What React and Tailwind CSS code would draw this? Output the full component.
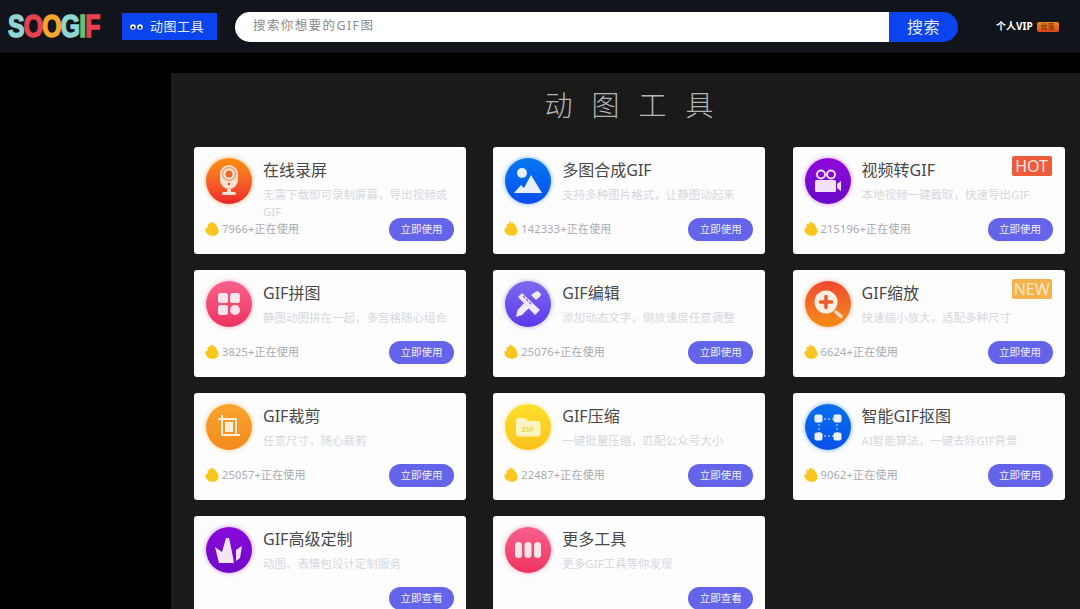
import React from "react";

const Thumb = () => (
  <svg width="14" height="15" viewBox="0 0 14 15" className="shrink-0 -translate-y-px -translate-x-px scale-110">
    <path
      d="M1 8.500C1 7 2.200 6.400 3 7V4.200C3 3 4.600 2.900 4.900 4L5.200 2.400C5.500 1.100 7.200 1.200 7.300 2.500C7.800 1.600 9.300 2 9.200 3.200C10 3 10.600 3.600 10.500 4.500C11.600 5.600 13 7.500 13 9.500C13 12.500 10.800 14.200 7.500 14.200C3.500 14.200 1 11.500 1 8.500Z"
      fill="#fbc61d"
    />
  </svg>
);

const icons = {
  record: (
    <svg width="30" height="34" viewBox="0 0 30 34">
      <rect x="6" y="1" width="18" height="24" rx="9" fill="#fbe3d2" />
      <circle cx="15" cy="10" r="6.500" fill="none" stroke="#f3a27f" strokeWidth="1.500" />
      <circle cx="15" cy="10" r="3.500" fill="#ee6a2c" />
      <circle cx="15" cy="20" r="1.200" fill="#e8403a" />
      <rect x="13" y="25" width="4" height="3" fill="#fbe3d2" />
      <rect x="8" y="28" width="14" height="3" rx="1.500" fill="#fbe3d2" />
    </svg>
  ),
  image: (
    <svg width="30" height="30" viewBox="0 0 30 30">
      <circle cx="9" cy="7" r="5" fill="#e8effd" />
      <path d="M1 27L8 19L11 22L18 9L29 27Z" fill="#e8effd" />
    </svg>
  ),
  video: (
    <svg width="28" height="24" viewBox="0 0 28 24">
      <circle cx="7" cy="5.500" r="4" fill="none" stroke="#f0e0f8" strokeWidth="2" />
      <circle cx="17" cy="5.500" r="4" fill="none" stroke="#f0e0f8" strokeWidth="2" />
      <rect x="1" y="11" width="21" height="12" rx="1.500" fill="#f0e0f8" />
      <path d="M23 15L27 12V22L23 19Z" fill="#f0e0f8" />
    </svg>
  ),
  grid: (
    <svg width="22" height="22" viewBox="0 0 22 22" fill="#fbe4ea">
      <rect x="0" y="0" width="10" height="10" rx="2.500" />
      <rect x="12" y="0" width="10" height="10" rx="2.500" />
      <rect x="0" y="12" width="10" height="10" rx="2.500" />
      <circle cx="17" cy="17" r="5" />
    </svg>
  ),
  edit: (
    <svg width="28" height="28" viewBox="0 0 28 28" fill="#efeafd">
      <path d="M4 7L8 3L26 20L21 25Z" />
      <path d="M17 5L22 1.500C23 1 24 1 25 2L26.500 3.500C27 4.500 27 5.500 26 6.500L22 10Z" />
      <path d="M14 9L19 14L8 25L2 27L3.500 20Z" />
      <path d="M9 6L11 8M12 9L14 11M15 12L17 14" stroke="#7a5df0" strokeWidth="1.200" />
    </svg>
  ),
  zoom: (
    <svg width="30" height="30" viewBox="0 0 30 30">
      <circle cx="13" cy="13" r="11.500" fill="#fdeee4" />
      <path d="M13 7.500V18.500M7.500 13H18.500" stroke="#ec5a25" strokeWidth="3.500" strokeLinecap="round" />
      <path d="M23 23L28 27.500" stroke="#fbd9b8" strokeWidth="3.500" strokeLinecap="round" />
    </svg>
  ),
  crop: (
    <svg width="24" height="26" viewBox="0 0 24 26" fill="none" stroke="#fdeedb" strokeWidth="2">
      <path d="M1 5H19V22" />
      <path d="M5 1V21H23" />
      <rect x="8" y="8" width="8" height="10" fill="#fdeedb" stroke="none" />
    </svg>
  ),
  zip: (
    <svg width="26" height="20" viewBox="0 0 26 20">
      <path d="M1 3C1 2 2 1 3 1H10L13 4H24C25 4 25.500 5 25.500 6V17C25.500 18.500 24.500 19.500 23 19.500H3C2 19.500 1 18.500 1 17Z" fill="#fdf3bf" />
      <text x="13" y="15" textAnchor="middle" fontSize="8" fontWeight="700" fill="#f6d53a" fontFamily="Liberation Sans, sans-serif">ZIP</text>
    </svg>
  ),
  matte: (
    <svg width="28" height="27" viewBox="0 0 28 27">
      <path d="M6 5H22M6 22H22M5 6V21M23 6V21" stroke="#d6e4fd" strokeWidth="1" strokeDasharray="2 2" fill="none" />
      <rect x="0.500" y="0.500" width="8" height="8" rx="2" fill="#eaf1fe" />
      <rect x="19.500" y="0.500" width="8" height="8" rx="2" fill="#eaf1fe" />
      <rect x="0.500" y="18.500" width="8" height="8" rx="2" fill="#eaf1fe" />
      <rect x="19.500" y="18.500" width="8" height="8" rx="2" fill="#eaf1fe" />
    </svg>
  ),
  crown: (
    <svg width="28" height="28" viewBox="0 0 28 28" fill="#f6e6fb">
      <path d="M0 11L7 16L11 2L14 2L17 16L19 27H4Z" />
      <path d="M21 14L27 10L25 22L21 25Z" />
    </svg>
  ),
  more: (
    <svg width="26" height="16" viewBox="0 0 26 16" fill="#fbe4ea">
      <rect x="0" y="0" width="7" height="16" rx="3.500" />
      <rect x="9.500" y="0" width="7" height="16" rx="3.500" />
      <rect x="19" y="0" width="7" height="16" rx="3.500" />
    </svg>
  ),
};

const tools = [
  { title: "在线录屏", desc: "无需下载即可录制屏幕，导出视频或GIF", count: "7966", icon: "record", tone: "bg-gradient-to-b from-[#fb8f0c] to-[#ee1c2c] shadow-[0_0_5px_#fbb36a]" },
  { title: "多图合成GIF", desc: "支持多种图片格式，让静图动起来", count: "142333", icon: "image", tone: "bg-gradient-to-b from-[#0a78f0] to-[#0a4df0] shadow-[0_0_5px_#7db0fa]" },
  { title: "视频转GIF", desc: "本地视频一键截取，快速导出GIF", count: "215196", icon: "video", tone: "bg-gradient-to-b from-[#8f08dc] to-[#6a08c8] shadow-[0_0_5px_#cf8df0]", badge: "HOT" },
  { title: "GIF拼图", desc: "静图动图拼在一起，多宫格随心组合", count: "3825", icon: "grid", tone: "bg-gradient-to-b from-[#f8608c] to-[#ee3060] shadow-[0_0_5px_#fba3bb]" },
  { title: "GIF编辑", desc: "添加动态文字，倒放速度任意调整", count: "25076", icon: "edit", tone: "bg-gradient-to-b from-[#7f68ee] to-[#5b38ea] shadow-[0_0_5px_#b7a8f6]" },
  { title: "GIF缩放", desc: "快速缩小放大，适配多种尺寸", count: "6624", icon: "zoom", tone: "bg-gradient-to-b from-[#f0452f] to-[#f58c10] shadow-[0_0_5px_#f9b48a]", badge: "NEW" },
  { title: "GIF裁剪", desc: "任意尺寸，随心裁剪", count: "25057", icon: "crop", tone: "bg-gradient-to-b from-[#fba52c] to-[#f28a1c] shadow-[0_0_5px_#fbcb8a]" },
  { title: "GIF压缩", desc: "一键批量压缩，匹配公众号大小", count: "22487", icon: "zip", tone: "bg-gradient-to-b from-[#fde02a] to-[#fbc21c] shadow-[0_0_5px_#fde68a]" },
  { title: "智能GIF抠图", desc: "AI智能算法，一键去除GIF背景", count: "9062", icon: "matte", tone: "bg-gradient-to-b from-[#0a70ee] to-[#0a50ea] shadow-[0_0_5px_#7db0fa]" },
  { title: "GIF高级定制", desc: "动图、表情包设计定制服务", icon: "crown", tone: "bg-gradient-to-b from-[#8a08dc] to-[#7008c8] shadow-[0_0_5px_#cf8df0]", action: "立即查看" },
  { title: "更多工具", desc: "更多GIF工具等你发现", icon: "more", tone: "bg-gradient-to-b from-[#f8608c] to-[#ee3060] shadow-[0_0_5px_#fba3bb]", action: "立即查看" },
];

const ToolCard = ({ tool }) => (
  <div className="relative flex h-[107px] flex-col rounded-[3px] bg-[#fdfdfe] pb-[13px] pl-3 pr-3 pt-[11px]">
    {tool.badge === "HOT" && (
      <span className="absolute right-[13px] top-[9px] flex h-5 w-10 items-center justify-center rounded-[2px] bg-[#ee5a3c] text-[16px] leading-none text-[#fde8df]">HOT</span>
    )}
    {tool.badge === "NEW" && (
      <span className="absolute right-[13px] top-[9px] flex h-5 w-10 items-center justify-center rounded-[2px] bg-[#f6b24c] text-[16px] leading-none text-[#fdeacb]">NEW</span>
    )}
    <div className="flex gap-[11px]">
      <div className={`flex h-[46px] w-[46px] shrink-0 items-center justify-center rounded-full ${tool.tone}`}>
        {icons[tool.icon]}
      </div>
      <div className="min-w-0 pt-px">
        <h3 className="text-[16px] leading-[22px] text-[#484848]">{tool.title}</h3>
        <p className="mt-[5px] h-[31px] w-[190px] text-[11.500px] leading-[17px] text-[#d6d8dd]">{tool.desc}</p>
      </div>
    </div>
    <div className="mt-auto flex items-center justify-between">
      {tool.count ? (
        <div className="flex items-center gap-[2px] text-[11px] tracking-[0.2px] text-[#a9abb0]">
          <Thumb />
          <span>{tool.count}+正在使用</span>
        </div>
      ) : (
        <span />
      )}
      <button className="h-[23px] w-[65px] rounded-full bg-[#6464ea] text-[10.500px] text-[#f0f0fd]">
        {tool.action || "立即使用"}
      </button>
    </div>
  </div>
);

const App = () => {
  return (
    <div className="h-[609px] w-[1080px] overflow-hidden bg-black font-['Noto_Sans','Noto_Sans_CJK_SC',sans-serif]">
      {/* Header */}
      <header className="flex h-[53px] items-center bg-[#12141c] pl-2">
        <div className="w-[92px] overflow-visible">
          <div className="flex origin-left scale-x-[0.8] items-center font-['Liberation_Sans',sans-serif] text-[31px] font-bold leading-none tracking-[-1px] [-webkit-text-stroke:1.5px_currentColor]">
            <span className="text-[#8fd6d2]">S</span>
            <span className="text-[#e8424f]">O</span>
            <span className="text-[#f3a72e]">O</span>
            <span className="text-[#8fd6d2]">G</span>
            <span className="text-[#6fbf73]">I</span>
            <span className="text-[#e8424f]">F</span>
          </div>
        </div>
        <button className="ml-[22px] flex h-[27px] w-[95px] items-center gap-[7px] bg-[#0b44ee] pl-2 text-[13px] tracking-[0.5px] text-[#e6ecfd]">
          <svg width="13" height="8" viewBox="0 0 13 8">
            <circle cx="3" cy="4" r="2.800" fill="#f5f5f5" />
            <circle cx="10" cy="4" r="2.800" fill="#f5f5f5" />
            <circle cx="3" cy="4.500" r="1.300" fill="#12141c" />
            <circle cx="10" cy="4.500" r="1.300" fill="#12141c" />
          </svg>
          动图工具
        </button>
        <div className="ml-[18px] flex h-[30px] w-[723px]">
          <div className="flex flex-1 items-center rounded-l-full bg-white pl-[18px] text-[12.500px] tracking-[1.400px] text-[#8a8a8a]">
            搜索你想要的GIF图
          </div>
          <button className="w-[69px] rounded-r-full bg-[#0b44ee] text-[16px] tracking-[0.5px] text-[#e6ecfd]">搜索</button>
        </div>
        <div className="ml-[38px] flex items-center gap-1">
          <span className="text-[10px] font-bold text-white">个人VIP</span>
          <span className="flex h-[10px] w-[22px] items-center justify-center rounded-[2px] bg-gradient-to-b from-[#ee8a1c] to-[#d8481c] text-[7px] leading-none text-[#5a1c08]">优惠</span>
        </div>
      </header>

      {/* Tool panel */}
      <main className="ml-[171px] mt-5 min-h-[600px] bg-[#1a1a1a] pl-[23px]">
        <h1 className="h-[74px] pl-[3px] pt-[11px] text-center text-[28px] font-light leading-[42px] tracking-[19px] text-[#b4b4b4]">动图工具</h1>
        <div className="grid grid-cols-[repeat(3,272px)] gap-x-[27.300px] gap-y-4">
          {tools.map((tool) => (
            <ToolCard key={tool.title} tool={tool} />
          ))}
        </div>
      </main>
    </div>
  );
};

export default App;
